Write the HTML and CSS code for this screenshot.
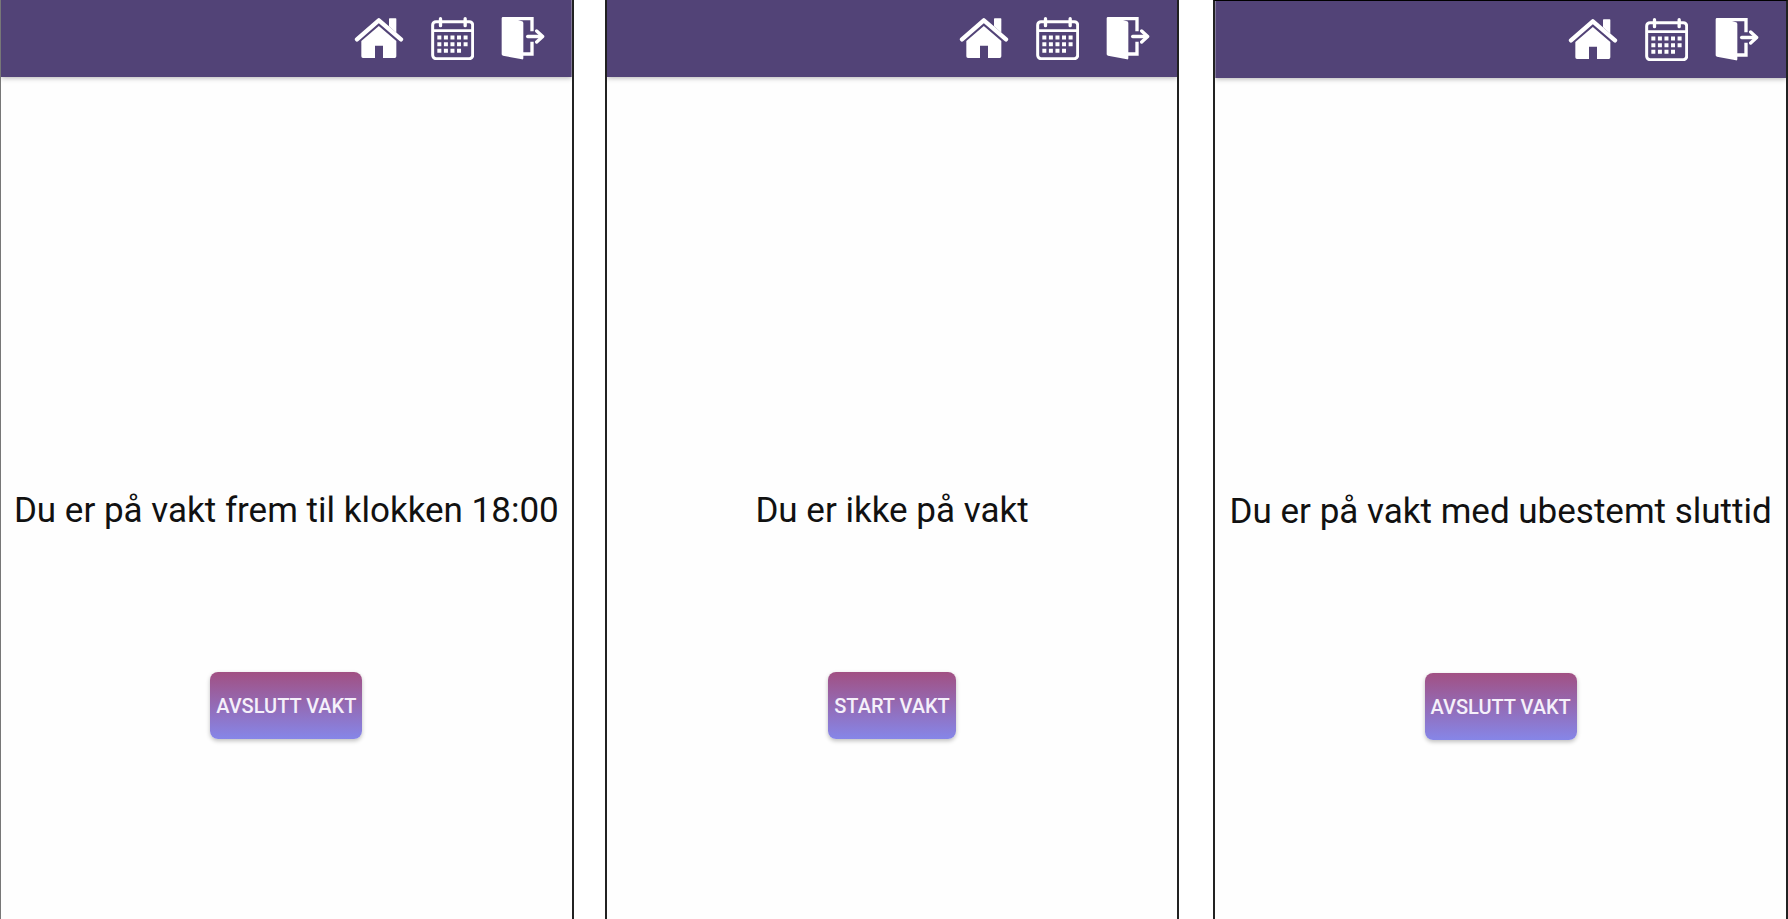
FILE: index.html
```html
<!DOCTYPE html>
<html lang="no">
<head>
<meta charset="utf-8">
<title>Vakt</title>
<link rel="stylesheet" href="styles.css">
</head>
<body>
<svg class="sprite" aria-hidden="true">
  <symbol id="home" viewBox="43 50 150 126">
    <path d="M52 117L117.500 60L184 117" fill="none" stroke="#fff" stroke-width="13" stroke-linecap="round" stroke-linejoin="round"/>
    <path d="M148 56q0-2 2-2h18q2 0 2 2v41l-22-19z"/>
    <path d="M65 122L117.500 77L170 122V168q0 5-5 5H130V136H106V173H70q-5 0-5-5z"/>
  </symbol>
  <symbol id="calendar" viewBox="273 50 129 129">
    <rect x="278" y="64" width="120" height="111" rx="10" fill="none" stroke="#fff" stroke-width="9"/>
    <path d="M278 91H398" stroke="#fff" stroke-width="8"/>
    <path d="M301.500 55V76M375.500 55V76" stroke="#fff" stroke-width="10" stroke-linecap="round"/>
    <path d="M292 111.500H384M292 131.500H384M292 151.500H364" stroke="#fff" stroke-width="12" stroke-dasharray="12 7.700"/>
  </symbol>
  <symbol id="exit" viewBox="483 50 132 129">
    <path d="M487 55H576V93M576 124V161H548" fill="none" stroke="#fff" stroke-width="10"/>
    <path d="M485 54q0-3 3-3h20l38 12q4 1 4 5V174q0 4-4 3L489 166q-4-1-4-4z"/>
    <path d="M563 108.500H602" fill="none" stroke="#fff" stroke-width="10" stroke-linecap="round"/>
    <path d="M590 92L608 108.500L590 125" fill="none" stroke="#fff" stroke-width="10" stroke-linecap="round" stroke-linejoin="round"/>
  </symbol>
</svg>
<div class="screens">
  <section class="screen screen-timed">
    <nav class="bar">
      <button class="nav" aria-label="Hjem"><svg class="icon-home"><use href="#home"/></svg></button>
      <button class="nav" aria-label="Kalender"><svg class="icon-calendar"><use href="#calendar"/></svg></button>
      <button class="nav" aria-label="Logg ut"><svg class="icon-exit"><use href="#exit"/></svg></button>
    </nav>
    <div class="content">
      <p class="status">Du er på vakt frem til klokken 18:00</p>
      <button class="action">AVSLUTT VAKT</button>
    </div>
  </section>
  <section class="screen screen-off">
    <nav class="bar">
      <button class="nav" aria-label="Hjem"><svg class="icon-home"><use href="#home"/></svg></button>
      <button class="nav" aria-label="Kalender"><svg class="icon-calendar"><use href="#calendar"/></svg></button>
      <button class="nav" aria-label="Logg ut"><svg class="icon-exit"><use href="#exit"/></svg></button>
    </nav>
    <div class="content">
      <p class="status">Du er ikke på vakt</p>
      <button class="action">START VAKT</button>
    </div>
  </section>
  <section class="screen screen-open">
    <nav class="bar">
      <button class="nav" aria-label="Hjem"><svg class="icon-home"><use href="#home"/></svg></button>
      <button class="nav" aria-label="Kalender"><svg class="icon-calendar"><use href="#calendar"/></svg></button>
      <button class="nav" aria-label="Logg ut"><svg class="icon-exit"><use href="#exit"/></svg></button>
    </nav>
    <div class="content">
      <p class="status">Du er på vakt med ubestemt sluttid</p>
      <button class="action">AVSLUTT VAKT</button>
    </div>
  </section>
</div>
</body>
</html>
```
FILE: styles.css
```css
* { box-sizing: border-box; }
body { margin: 0; background: #fff; font-family: Roboto, "Liberation Sans", sans-serif; }
.sprite { display: none; }
.screens { display: flex; min-height: 100vh; }
.screen { flex: 1 1 0; min-width: 0; background: #fefefe; border: solid #222; border-width: 0 2px; }
.screen-timed { border-left: 1px solid #777; margin-right: 31px; }
.screen-open { border-top: 1px solid #000; margin-left: 34px; }
.bar {
  display: flex;
  justify-content: flex-end;
  align-items: flex-start;
  gap: 27px;
  height: 77px;
  padding: 17px 27px 0 0;
  background: #524377;
  box-shadow: 0 1px 5px rgba(0, 0, 0, 0.3);
  clip-path: inset(0 0 -10px 0);
}
.nav { display: flex; padding: 0; border: 0; background: none; cursor: pointer; }
.nav svg { display: block; fill: #fff; }
.icon-home { width: 50px; height: 42px; }
.icon-calendar { width: 43px; height: 43px; }
.icon-exit { width: 44px; height: 43px; }
.content { display: flex; flex-direction: column; align-items: center; gap: 140px; padding-top: 413px; }
.status { margin: 0; font-size: 35px; line-height: 42px; color: #111; white-space: nowrap; }
.action {
  height: 67px;
  padding: 0 6px;
  border: 0;
  border-radius: 8px;
  background: linear-gradient(#a15083, #8686e8);
  box-shadow: 0 2px 4px rgba(0, 0, 0, 0.25);
  color: #f5f0fa;
  font: 500 20px/24px Roboto, "Liberation Sans", sans-serif;
  cursor: pointer;
}
```
